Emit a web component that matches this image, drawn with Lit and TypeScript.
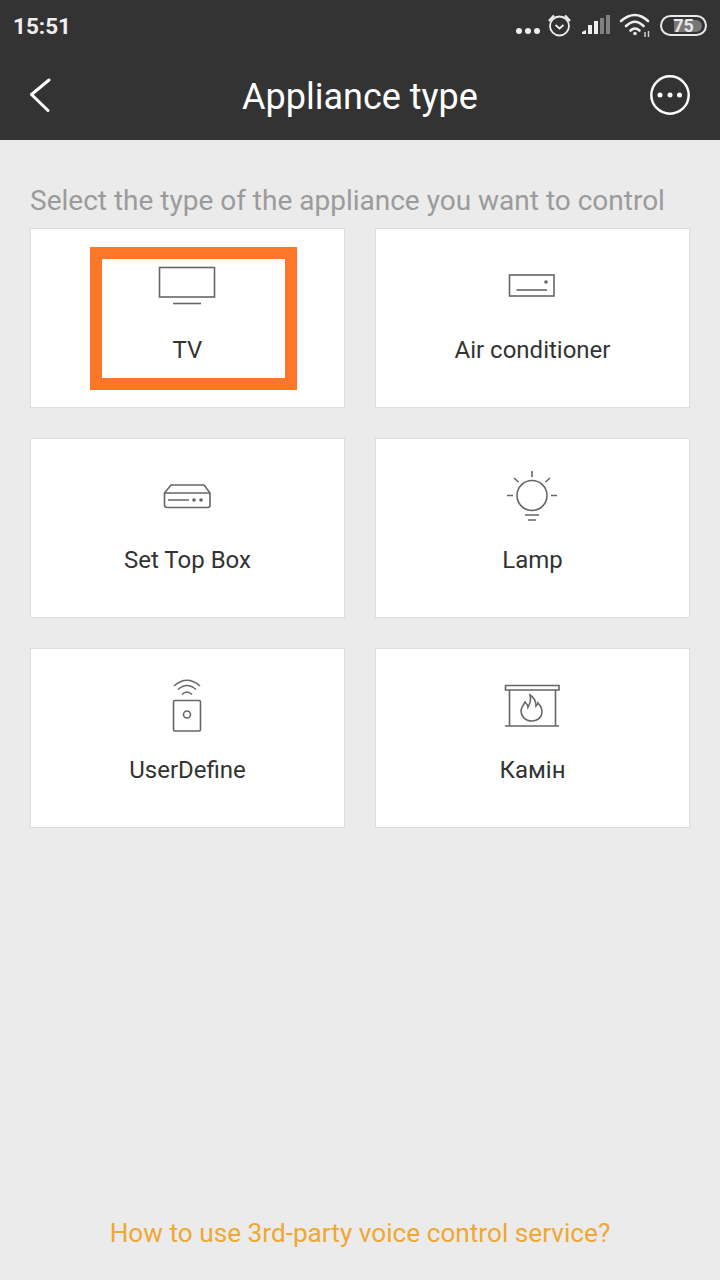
import { LitElement, html, css, svg } from "lit";
import { customElement } from "lit/decorators.js";

const icons = {
  tv: svg`<rect x="12.500" y="9.500" width="55" height="29.500"/><path d="M26 45.500H54"/>`,
  air: svg`<rect x="17.500" y="17" width="44.500" height="21"/><path d="M24.500 32H55"/><circle cx="54" cy="24" r="1.800" class="f"/>`,
  stb: svg`<path d="M24 17H57L63 25V37Q63 39.500 60.500 39.500H20Q17.500 39.500 17.500 37V25Z"/><path d="M17.500 25H63M21 32H42"/><circle cx="47" cy="32" r="1.800" class="f"/><circle cx="54" cy="32" r="1.800" class="f"/>`,
  lamp: svg`<circle cx="40" cy="27.500" r="15"/><path d="M40 3V9M15 27.500H21M59 27.500H65M22 10L26.500 14M58 10L53.500 14M33 47H47M36 52H44"/>`,
  user: svg`<rect x="26.500" y="22.500" width="27" height="30.500" rx="1.500"/><circle cx="40" cy="36.500" r="3.500"/><path d="M27 8Q40 -3.500 53 8M31 11.500Q40 3.500 49 11.500M35 16.500Q40 11.500 45 16.500"/>`,
  fire: svg`<path d="M13.500 7.500H67V12H13.500ZM17.500 12V48M63.500 12V48M13 48H67"/><path d="M40 43C33 43 29 38 29 33C29 29 32 27 33 24C35 26 36 28 36 29C38 26 39 21 38 17C43 20 44 25 44 28C45 27 46 26 46 25C48 27 50 30 50 34C50 39 46 43 40 43Z"/>`,
};

const items: [keyof typeof icons, string][] = [
  ["tv", "TV"],
  ["air", "Air conditioner"],
  ["stb", "Set Top Box"],
  ["lamp", "Lamp"],
  ["user", "UserDefine"],
  ["fire", "Камін"],
];

@customElement("app-root")
export class AppRoot extends LitElement {
  static styles = css`
    :host {
      display: block;
      width: 720px;
      height: 1280px;
      background: #ebebeb;
      font-family: Roboto, "Noto Sans", sans-serif;
      overflow: hidden;
    }
    .top { background: #333333; height: 140px; }
    .status {
      height: 50px;
      display: flex;
      align-items: center;
      justify-content: space-between;
      padding: 0 13px 0 13px;
      color: #eeeeee;
    }
    .time { font-size: 22.500px; font-weight: 700; line-height: 52px; height: 50px; }
    .indicators { display: flex; align-items: center; }
    .indicators svg { display: block; }
    .battery {
      width: 47px;
      height: 21px;
      box-sizing: border-box;
      border: 2px solid #e8e8e8;
      border-radius: 11px;
      margin-left: 8px;
      position: relative;
      display: flex;
      align-items: center;
      justify-content: center;
      overflow: hidden;
    }
    .battery .fill {
      position: absolute;
      left: 12px; top: 3px; bottom: 2px; right: 3px;
      background: #777777;
      border-radius: 0 6px 6px 0;
    }
    .battery span {
      position: relative;
      font-size: 18px;
      font-weight: 700;
      color: #e8e8e8;
      line-height: 17px;
    }
    .nav {
      height: 90px;
      display: flex;
      align-items: center;
      justify-content: space-between;
      padding: 0 30px;
    }
    .nav svg { display: block; fill: none; stroke: #fff; }
    .nav h1 {
      margin: 0;
      font-size: 36px;
      font-weight: 400;
      color: #ffffff;
      line-height: 94px;
      height: 90px;
    }
    main {
      height: 1140px;
      box-sizing: border-box;
      padding: 42px 30px 29px;
      display: flex;
      flex-direction: column;
    }
    .hint {
      margin: 0;
      font-size: 28px;
      line-height: 38px;
      height: 46px;
      color: #9b9b9b;
      white-space: nowrap;
    }
    .grid {
      display: grid;
      grid-template-columns: 315px 315px;
      grid-auto-rows: 180px;
      gap: 30px;
    }
    .card {
      position: relative;
      box-sizing: border-box;
      background: #ffffff;
      border: 1px solid #dddddd;
      display: flex;
      flex-direction: column;
      align-items: center;
      padding-top: 29px;
    }
    .card svg {
      display: block;
      fill: none;
      stroke: #666666;
      stroke-width: 1.600;
    }
    .card svg .f { fill: #666666; stroke: none; }
    .card span {
      font-size: 24px;
      line-height: 32px;
      color: #333333;
      margin-top: 16px;
    }
    .mark {
      position: absolute;
      left: 59px;
      top: 18px;
      width: 207px;
      height: 143px;
      box-sizing: border-box;
      border: 12px solid #ff7629;
    }
    .link {
      margin-top: auto;
      text-align: center;
      font-size: 26.200px;
      line-height: 36px;
      color: #f0a733;
    }
  `;

  render() {
    return html`
      <div class="top">
        <div class="status">
          <div class="time">15:51</div>
          <div class="indicators">
            <svg width="136" height="50" viewBox="0 0 136 50">
              <g fill="#eeeeee">
                <circle cx="3" cy="31" r="3"/><circle cx="12" cy="31" r="3"/><circle cx="21" cy="31" r="3"/>
              </g>
              <g fill="none" stroke="#eeeeee" stroke-width="1.800">
                <circle cx="43.500" cy="26" r="9.500"/>
                <path d="M39.500 25L43.500 28.500L47.500 25"/>
                <path d="M33 21L38 15.500M54 21L49 15.500" stroke-width="2.400"/>
              </g>
              <g>
                <path d="M66 34V32L70 30V34Z" fill="#eeeeee"/>
                <rect x="72" y="25" width="4" height="9" fill="#eeeeee"/>
                <rect x="78" y="21" width="4" height="13" fill="#eeeeee"/>
                <rect x="84" y="18" width="4" height="16" fill="#808080"/>
                <rect x="90" y="15" width="4" height="19" fill="#808080"/>
              </g>
              <g fill="none" stroke="#eeeeee" stroke-width="2.600" stroke-linecap="round">
                <path d="M105 21Q119 9 132 21"/>
                <path d="M110 26Q119 17.500 127.500 26"/>
                <path d="M114.500 30.500Q119 26.500 123.500 30.500"/>
              </g>
              <circle cx="119" cy="33.500" r="1.800" fill="#eeeeee"/>
              <path d="M129 32V37M132.500 31V37" stroke="#cfcfcf" stroke-width="1.500"/>
            </svg>
            <div class="battery"><i class="fill"></i><span>75</span></div>
          </div>
        </div>
        <div class="nav">
          <svg width="40" height="36" viewBox="0 0 40 36"><path d="M19 2L1.500 16.500L18 32.500" stroke-width="3" stroke-linecap="round" stroke-linejoin="round" transform="translate(0 1)"/></svg>
          <h1>Appliance type</h1>
          <svg width="40" height="40" viewBox="0 0 40 40">
            <circle cx="20" cy="20" r="18.700" stroke-width="2.400"/>
            <g fill="#fff" stroke="none"><circle cx="10" cy="20" r="2.500"/><circle cx="20" cy="20" r="2.500"/><circle cx="29.500" cy="20" r="2.500"/></g>
          </svg>
        </div>
      </div>
      <main>
        <p class="hint">Select the type of the appliance you want to control</p>
        <div class="grid">
          ${items.map(
            ([icon, label], i) => html`
              <div class="card">
                <svg width="81" height="60" viewBox="0 0 81 60">${icons[icon]}</svg>
                <span>${label}</span>
                ${i === 0 ? html`<div class="mark"></div>` : ""}
              </div>
            `
          )}
        </div>
        <div class="link">How to use 3rd-party voice control service?</div>
      </main>
    `;
  }
}
